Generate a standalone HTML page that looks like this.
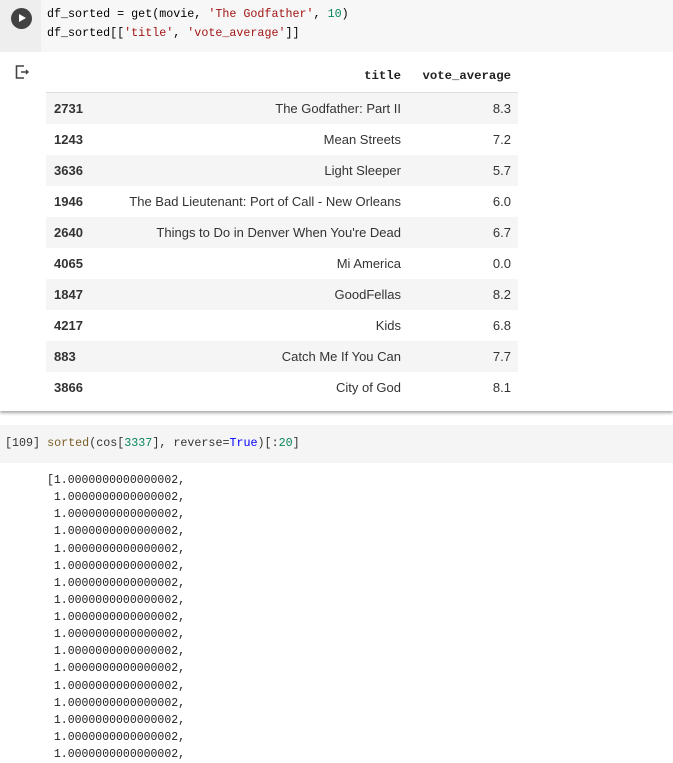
<!DOCTYPE html>
<html><head><meta charset="utf-8"><style>
body{margin:0;width:673px;height:745px;overflow:hidden;background:#fff;font-family:"Liberation Sans","Noto Sans CJK KR",sans-serif;position:relative}
.mono{font-family:"Liberation Mono",monospace}
#c1{position:absolute;left:0;top:0;width:673px;height:411px;background:#fff;box-shadow:0 2px 3px rgba(0,0,0,.35)}
#gut{position:absolute;left:0;top:0;width:41px;height:52px;background:#eeeeee}
#code1{position:absolute;left:41px;top:0;width:632px;height:52px;background:#f7f7f7}
.code{position:absolute;font-size:11.7px;line-height:19px;color:#000;white-space:pre}
.s{color:#a31515}.n{color:#098658}.f{color:#795e26}.k{color:#0000ff}
#play{position:absolute;left:11px;top:8px;width:21px;height:21px;border-radius:50%;background:#424242}
#play:after{content:"";position:absolute;left:8px;top:6px;border-left:7px solid #fff;border-top:4.5px solid transparent;border-bottom:4.5px solid transparent}
table{position:absolute;left:46px;top:60px;border-collapse:collapse;font-size:13px;color:#333;table-layout:fixed;width:472px}
td,th{height:31px;padding:0 7px;text-align:right;white-space:nowrap;overflow:hidden}
th{font-family:"Liberation Mono",monospace;font-size:12.3px;font-weight:bold;color:#222;height:32px;border-bottom:1px solid #ddd}
td.i{text-align:left;font-weight:bold;padding-left:8px}
tr.g td{background:#f5f5f5}
#c2{position:absolute;left:0;top:425px;width:673px;height:38px;background:#f5f5f5}
#out{position:absolute;left:47px;top:472px;font-size:11.5px;line-height:17.13px;color:#222;white-space:pre}
</style></head><body>
<div id="c1">
<div id="gut"><div id="play"></div></div>
<div id="code1"></div>
<div class="code mono" style="left:47px;top:5px">df_sorted = get(movie, <span class="s">'The Godfather'</span>, <span class="n">10</span>)
df_sorted[[<span class="s">'title'</span>, <span class="s">'vote_average'</span>]]</div>
<svg style="position:absolute;left:15px;top:65px" width="16" height="14" viewBox="0 0 16 14"><path d="M9 1H1.5v12H9" fill="none" stroke="#444" stroke-width="1.6"/><path d="M6 7h7M11 5l2 2-2 2" fill="none" stroke="#444" stroke-width="1.4"/></svg>
<table>
<colgroup><col style="width:50px"><col style="width:312px"><col style="width:110px"></colgroup>
<tr><th></th><th>title</th><th>vote_average</th></tr>
<tr class="g"><td class="i">2731</td><td>The Godfather: Part II</td><td>8.3</td></tr>
<tr><td class="i">1243</td><td>Mean Streets</td><td>7.2</td></tr>
<tr class="g"><td class="i">3636</td><td>Light Sleeper</td><td>5.7</td></tr>
<tr><td class="i">1946</td><td>The Bad Lieutenant: Port of Call - New Orleans</td><td>6.0</td></tr>
<tr class="g"><td class="i">2640</td><td>Things to Do in Denver When You're Dead</td><td>6.7</td></tr>
<tr><td class="i">4065</td><td>Mi America</td><td>0.0</td></tr>
<tr class="g"><td class="i">1847</td><td>GoodFellas</td><td>8.2</td></tr>
<tr><td class="i">4217</td><td>Kids</td><td>6.8</td></tr>
<tr class="g"><td class="i">883</td><td>Catch Me If You Can</td><td>7.7</td></tr>
<tr><td class="i">3866</td><td>City of God</td><td>8.1</td></tr>
</table>
</div>
<div id="c2"></div>
<div class="code mono" style="left:5px;top:434px;color:#333">[109] <span class="f">sorted</span>(cos[<span class="n">3337</span>], reverse=<span class="k">True</span>)[:<span class="n">20</span>]</div>
<div id="out" class="mono">[1.0000000000000002,
 1.0000000000000002,
 1.0000000000000002,
 1.0000000000000002,
 1.0000000000000002,
 1.0000000000000002,
 1.0000000000000002,
 1.0000000000000002,
 1.0000000000000002,
 1.0000000000000002,
 1.0000000000000002,
 1.0000000000000002,
 1.0000000000000002,
 1.0000000000000002,
 1.0000000000000002,
 1.0000000000000002,
 1.0000000000000002,</div>
</body></html>
